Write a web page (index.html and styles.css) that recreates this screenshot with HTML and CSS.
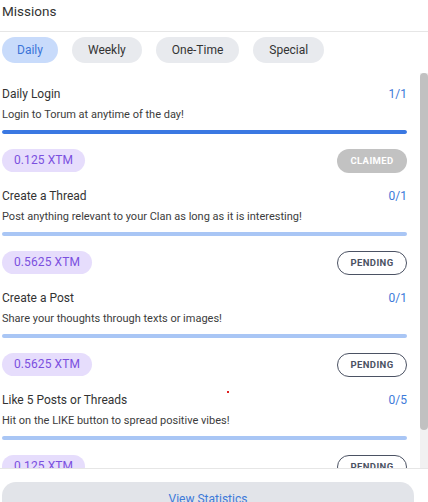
FILE: index.html
```html
<!DOCTYPE html>
<html>
<head>
<meta charset="utf-8">
<link rel="stylesheet" href="styles.css">
</head>
<body>
<div class="page">
  <header class="header"><h1 class="title">Missions</h1></header>
  <nav class="tabs">
    <button class="tab active">Daily</button>
    <button class="tab">Weekly</button>
    <button class="tab">One-Time</button>
    <button class="tab">Special</button>
  </nav>
  <div class="scroller">
    <div class="list">
      <div class="item">
        <div class="row"><span class="name">Daily Login</span><span class="count">1/1</span></div>
        <div class="desc">Login to Torum at anytime of the day!</div>
        <div class="bar"><div class="fill" style="width:100%"></div></div>
        <div class="actions"><span class="reward">0.125 XTM</span><span class="btn claimed">CLAIMED</span></div>
      </div>
      <div class="item">
        <div class="row"><span class="name">Create a Thread</span><span class="count">0/1</span></div>
        <div class="desc">Post anything relevant to your Clan as long as it is interesting!</div>
        <div class="bar"><div class="fill" style="width:0%"></div></div>
        <div class="actions"><span class="reward">0.5625 XTM</span><span class="btn pending">PENDING</span></div>
      </div>
      <div class="item">
        <div class="row"><span class="name">Create a Post</span><span class="count">0/1</span></div>
        <div class="desc">Share your thoughts through texts or images!</div>
        <div class="bar"><div class="fill" style="width:0%"></div></div>
        <div class="actions"><span class="reward">0.5625 XTM</span><span class="btn pending">PENDING</span></div>
      </div>
      <div class="item">
        <div class="row"><span class="name">Like 5 Posts or Threads</span><span class="dot"></span><span class="count">0/5</span></div>
        <div class="desc">Hit on the LIKE button to spread positive vibes!</div>
        <div class="bar"><div class="fill" style="width:0%"></div></div>
        <div class="actions"><span class="reward">0.125 XTM</span><span class="btn pending">PENDING</span></div>
      </div>
    </div>
    <div class="scrollbar"><div class="thumb"></div></div>
  </div>
  <footer class="footer"><button class="stats">View Statistics</button></footer>
</div>
</body>
</html>
```
FILE: styles.css
```css
* { box-sizing: border-box; }
html, body { margin: 0; padding: 0; background: #fff; }
body { font-family: Roboto, "Liberation Sans", sans-serif; color: #333; overflow: hidden; height: 502px; }
.page { width: 428px; display: flex; flex-direction: column; }
.page > * { flex-shrink: 0; }
.header { height: 32px; border-bottom: 1px solid #e6e6e6; padding: 1px 2px 0; }
.title { margin: 0; font-size: 13.5px; font-weight: 400; line-height: 21px; color: #333; }
.tabs { display: flex; gap: 14px; padding: 0 2px; margin-top: 5px; }
.tab { height: 26px; border: none; border-radius: 13px; padding: 0 16px; background: #e8eaee; color: #333; font-family: inherit; font-size: 12px; }
.tab.active { background: #c8dbfb; color: #3b74d8; padding: 0 15px; }
.scroller { margin-top: 10px; height: 395px; display: flex; }
.list { flex: 1; overflow: hidden; padding: 13px 13px 0 2px; }
.scrollbar { width: 8px; background: #f1f1f1; }
.thumb { height: 357px; background: #c1c1c1; border-radius: 4px; }
.item { margin-bottom: 16px; }
.row { position: relative; display: flex; justify-content: space-between; align-items: center; height: 16px; }
.name { font-size: 12px; color: #333; }
.count { font-size: 12px; color: #3d7ad9; }
.dot { position: absolute; left: 225px; top: -1px; width: 2px; height: 2px; background: #e02020; }
.desc { margin-top: 5px; font-size: 11px; line-height: 16px; color: #3c3c3c; white-space: nowrap; }
.bar { margin-top: 7px; height: 4px; border-radius: 2px; background: #a9c6f5; overflow: hidden; }
.fill { height: 100%; background: #3a78e2; border-radius: 2px; }
.actions { margin-top: 15px; display: flex; justify-content: space-between; align-items: center; height: 23px; }
.reward { height: 23px; line-height: 23px; padding: 0 12px; border-radius: 12px; background: #e6ddfc; color: #7b50df; font-size: 12px; letter-spacing: 0.1px; }
.btn { width: 70px; height: 24px; border-radius: 12px; font-size: 9.5px; font-weight: 700; letter-spacing: 0.4px; display: flex; align-items: center; justify-content: center; }
.claimed { background: #c2c2c2; color: #fff; }
.pending { border: 1px solid #4b5263; color: #4b5263; background: #fff; }
.footer { border-top: 1px solid #e6e6e6; padding: 13px 14px 0 2px; }
.stats { width: 100%; height: 34px; border: none; border-radius: 14px; background: #e2e4e9; color: #3d7ad9; font-family: inherit; font-size: 12px; }
```
